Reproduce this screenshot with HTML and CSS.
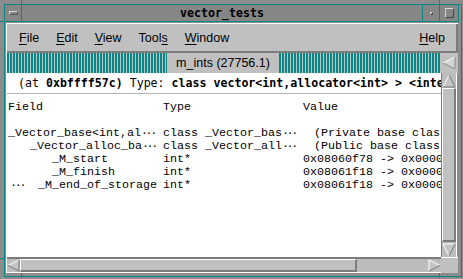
FILE: index.html
```html
<!DOCTYPE html>
<html lang="en">
<head>
    <meta charset="UTF-8">
    <title>vector_tests</title>
    <link rel="stylesheet" href="styles.css">
</head>
<body>

<div class="frame">
    <div class="win">
        <div class="titlebar">
            <div class="wm-menu"><span class="wm-bar"></span></div>
            <div class="title">vector_tests</div>
            <div class="wm-min"><span class="wm-dot"></span></div>
            <div class="wm-max"><span class="wm-box"></span></div>
        </div>

        <div class="client">
            <div class="menubar">
                <span class="menu"><u>F</u>ile</span>
                <span class="menu"><u>E</u>dit</span>
                <span class="menu"><u>V</u>iew</span>
                <span class="menu">Tool<u>s</u></span>
                <span class="menu"><u>W</u>indow</span>
                <span class="menu help"><u>H</u>elp</span>
            </div>

            <div class="tabstrip">
                <div class="stripes left"></div>
                <div class="tab">m_ints (27756.1)</div>
                <div class="stripes right"></div>
                <div class="pane-arrow">
                    <svg width="14" height="14" viewBox="0 0 14 14">
                        <polygon points="1,7 13,1 13,13" fill="#d4d4d4"/>
                        <polyline points="13,1 1,7" fill="none" stroke="#ffffff"/>
                        <polyline points="1,7 13,13 13,1" fill="none" stroke="#8a8a8a"/>
                    </svg>
                </div>
            </div>

            <div class="main">
                <div class="pane">
                    <div class="info">(at <b>0xbffff57c)</b> Type: <b>class vector&lt;int,allocator&lt;int&gt; &gt; &lt;inte</b></div>
                    <div class="fields">
                        <div class="row head">
                            <span class="cell">Field</span>
                            <span class="cell">Type</span>
                            <span class="cell">Value</span>
                        </div>
                        <div class="row blank"></div>
                        <div class="row">
                            <span class="cell">_Vector_base&lt;int,al<span class="dots">···</span></span>
                            <span class="cell">class _Vector_bas<span class="dots">···</span></span>
                            <span class="cell note">(Private base class</span>
                        </div>
                        <div class="row">
                            <span class="cell lvl1">_Vector_alloc_ba<span class="dots">···</span></span>
                            <span class="cell">class _Vector_all<span class="dots">···</span></span>
                            <span class="cell note">(Public base class)</span>
                        </div>
                        <div class="row">
                            <span class="cell lvl2">_M_start</span>
                            <span class="cell">int*</span>
                            <span class="cell">0x08060f78 -&gt; 0x0000</span>
                        </div>
                        <div class="row">
                            <span class="cell lvl2">_M_finish</span>
                            <span class="cell">int*</span>
                            <span class="cell">0x08061f18 -&gt; 0x0000</span>
                        </div>
                        <div class="row">
                            <span class="cell"><span class="dots lead">···</span>_M_end_of_storage</span>
                            <span class="cell">int*</span>
                            <span class="cell">0x08061f18 -&gt; 0x0000</span>
                        </div>
                    </div>
                </div>

                <div class="vscroll">
                    <div class="arrow">
                        <svg width="14" height="14" viewBox="0 0 14 14">
                            <polygon points="7,1 13,13 1,13" fill="#c4c4c4"/>
                            <polyline points="1,13 7,1" fill="none" stroke="#ffffff"/>
                            <polyline points="7,1 13,13 1,13" fill="none" stroke="#7a7a7a"/>
                        </svg>
                    </div>
                    <div class="vthumb"></div>
                    <div class="arrow">
                        <svg width="14" height="14" viewBox="0 0 14 14">
                            <polygon points="1,1 13,1 7,13" fill="#c4c4c4"/>
                            <polyline points="7,13 1,1 13,1" fill="none" stroke="#ffffff"/>
                            <polyline points="13,1 7,13" fill="none" stroke="#7a7a7a"/>
                        </svg>
                    </div>
                </div>
            </div>

            <div class="hrow">
                <div class="hscroll">
                    <div class="arrow">
                        <svg width="13" height="13" viewBox="0 0 13 13">
                            <polygon points="1,6.5 12,1 12,12" fill="#c4c4c4"/>
                            <polyline points="12,1 1,6.5" fill="none" stroke="#ffffff"/>
                            <polyline points="1,6.5 12,12 12,1" fill="none" stroke="#7a7a7a"/>
                        </svg>
                    </div>
                    <div class="hthumb"></div>
                    <div class="trough"></div>
                    <div class="arrow">
                        <svg width="13" height="13" viewBox="0 0 13 13">
                            <polygon points="1,1 12,6.5 1,12" fill="#c4c4c4"/>
                            <polyline points="1,12 1,1 12,6.5" fill="none" stroke="#ffffff"/>
                            <polyline points="12,6.5 1,12" fill="none" stroke="#7a7a7a"/>
                        </svg>
                    </div>
                </div>
                <div class="corner"></div>
            </div>
        </div>
    </div>

    <!-- resize handle marks on the frame -->
    <span class="mark v" style="left: 21px; top: 0;"></span>
    <span class="mark v" style="left: 439px; top: 0;"></span>
    <span class="mark h" style="left: 0; top: 21px;"></span>
    <span class="mark h" style="left: 0; top: 258px;"></span>
    <span class="mark v" style="left: 21px; top: 273px;"></span>
    <span class="mark v" style="left: 439px; top: 273px;"></span>
</div>

</body>
</html>
```

FILE: styles.css
```css
body {
    margin: 0;
    background: #8c8c8c;
}
.frame {
    position: relative;
    width: 463px;
    height: 279px;
    box-sizing: border-box;
    padding: 4px 1px 2px 4px;
    background: #8c8c8c;
    overflow: hidden;
}
.win {
    height: 100%;
    box-sizing: border-box;
    border: 1px solid #0e8585;
    display: flex;
    flex-direction: column;
}

/* title bar */
.titlebar {
    display: flex;
    height: 16px;
    margin-right: 2px;
    border-bottom: 1px solid #0e8585;
    border-right: 1px solid #0e8585;
    background: #868686;
}
.wm-menu {
    width: 16px;
    border-right: 1px solid #0e8585;
    display: flex;
    align-items: center;
    justify-content: center;
}
.wm-bar {
    width: 7px;
    height: 2px;
    border-top: 1px solid #d8d8d8;
    border-left: 1px solid #d8d8d8;
    border-bottom: 1px solid #555;
    border-right: 1px solid #555;
    background: #868686;
}
.title {
    flex: 1;
    text-align: center;
    font-family: "DejaVu Sans Mono", monospace;
    font-weight: bold;
    font-size: 11.6px;
    line-height: 16px;
    color: #000;
}
.wm-min {
    width: 16px;
    border-left: 1px solid #0e8585;
    border-right: 1px solid #0e8585;
    display: flex;
    align-items: center;
    justify-content: center;
}
.wm-dot {
    width: 1px;
    height: 1px;
    border-top: 1px solid #d8d8d8;
    border-left: 1px solid #d8d8d8;
    border-bottom: 1px solid #444;
    border-right: 1px solid #444;
}
.wm-max {
    width: 18px;
    display: flex;
    align-items: center;
    justify-content: center;
}
.wm-box {
    width: 7px;
    height: 8px;
    border-top: 1px solid #d8d8d8;
    border-left: 1px solid #d8d8d8;
    border-bottom: 1px solid #444;
    border-right: 1px solid #444;
}

/* client area */
.client {
    flex: 1;
    margin: 1px 3px 3px 1px;
    border-top: 1px solid #fff;
    border-left: 1px solid #fff;
    display: flex;
    flex-direction: column;
    min-height: 0;
}
.menubar {
    display: flex;
    align-items: center;
    gap: 17px;
    height: 27px;
    padding: 0 11px 0 12px;
    border-bottom: 2px solid #7c7c7c;
    border-right: 2px solid #7c7c7c;
    background: #c0c0c0;
    font-family: "Liberation Sans", Arial, sans-serif;
    font-size: 12.5px;
    color: #000;
}
.menu u {
    text-underline-offset: 2px;
}
.help {
    margin-left: auto;
}

.tabstrip {
    display: flex;
    height: 20px;
    background: #c0c0c0;
}
.stripes {
    background: repeating-linear-gradient(90deg, #0e8585 0, #0e8585 2px, #b8c8c8 2px, #b8c8c8 3px);
}
.stripes.left {
    width: 160px;
}
.stripes.right {
    flex: 1;
}
.tab {
    width: 112px;
    text-align: center;
    font-family: "Liberation Sans", Arial, sans-serif;
    font-size: 12.5px;
    line-height: 20px;
    color: #000;
}
.pane-arrow {
    width: 18px;
    display: flex;
    align-items: center;
    justify-content: center;
}

.main {
    display: flex;
    height: 184px;
}
.pane {
    width: 434px;
    background: #fff;
    overflow: hidden;
}
.info {
    height: 20px;
    padding-left: 11px;
    border-bottom: 1px solid #b4b4b4;
    font-family: "DejaVu Sans Mono", monospace;
    font-size: 11.6px;
    line-height: 20px;
    white-space: pre;
    color: #000;
}
.fields {
    padding: 7px 0 0 1px;
    font-family: "Liberation Mono", "Courier New", monospace;
    font-size: 11.67px;
    line-height: 13px;
    color: #000;
}
.row {
    display: grid;
    grid-template-columns: 155px 140px 1fr;
    height: 13px;
    white-space: pre;
}
.cell {
    overflow: hidden;
}
.lvl1 {
    padding-left: 22px;
}
.lvl2 {
    padding-left: 44px;
}
.note {
    padding-left: 11px;
}
.dots {
    letter-spacing: -2.3px;
}
.dots.lead {
    margin: 0 14px 0 2px;
}

/* scrollbars */
.vscroll {
    width: 14px;
    border-left: 1px solid #7c7c7c;
    border-right: 1px solid #fff;
    background: #bcbcbc;
    display: flex;
    flex-direction: column;
}
.vscroll .arrow {
    height: 15px;
    display: flex;
    align-items: center;
    justify-content: center;
}
.vthumb {
    flex: 1;
    border-top: 1px solid #fff;
    border-left: 1px solid #fff;
    border-right: 2px solid #7c7c7c;
    border-bottom: 2px solid #7c7c7c;
    background: #c0c0c0;
}
.hrow {
    display: flex;
    height: 16px;
}
.hscroll {
    width: 434px;
    box-sizing: border-box;
    border-top: 2px solid #7c7c7c;
    border-bottom: 1px solid #fff;
    background: #bcbcbc;
    display: flex;
}
.hscroll .arrow {
    width: 13px;
    display: flex;
    align-items: center;
    justify-content: center;
}
.hthumb {
    width: 334px;
    border-top: 1px solid #fff;
    border-left: 1px solid #fff;
    border-right: 2px solid #7c7c7c;
    border-bottom: 2px solid #7c7c7c;
    background: #c0c0c0;
}
.trough {
    flex: 1;
}
.corner {
    flex: 1;
    background: #c0c0c0;
    border-top: 1px solid #fff;
}

.mark {
    position: absolute;
    background: #0e8585;
}
.mark.v {
    width: 1px;
    height: 5px;
}
.mark.h {
    width: 5px;
    height: 1px;
}
```
